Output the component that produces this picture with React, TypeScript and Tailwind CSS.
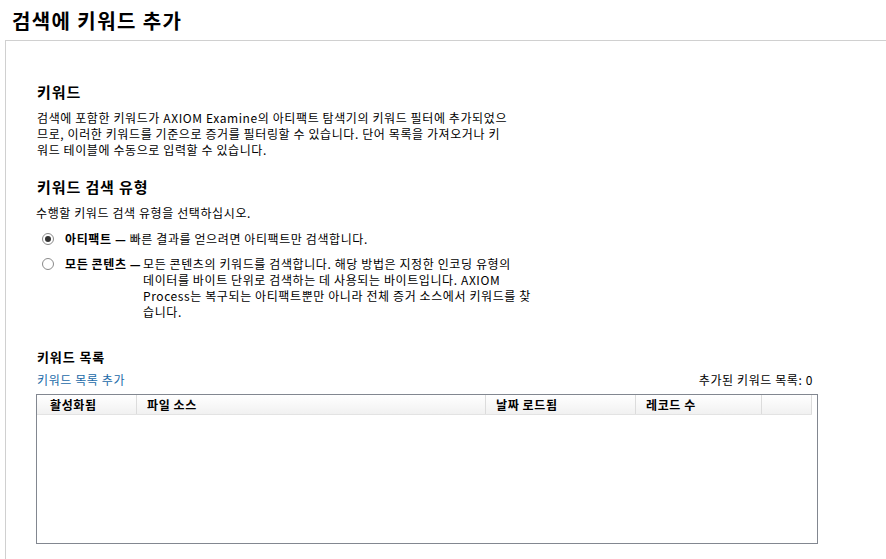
const columns = [
  { label: "활성화됨", width: "w-[100px]", pad: "pl-[13px]" },
  { label: "파일 소스", width: "w-[349px]", pad: "pl-[10px]" },
  { label: "날짜 로드됨", width: "w-[150px]", pad: "pl-[10px]" },
  { label: "레코드 수", width: "w-[126px]", pad: "pl-[10px]" },
  { label: "", width: "w-[50px]", pad: "" },
]

function Radio({ checked }: { checked?: boolean }) {
  return (
    <span className="mt-[2px] flex h-[12px] w-[12px] shrink-0 items-center justify-center rounded-full border border-[#8a8a8a] bg-white">
      {checked && <span className="h-[6px] w-[6px] rounded-full bg-[#333]" />}
    </span>
  )
}

export default function App() {
  return (
    <div
      className="h-[559px] w-[886px] overflow-hidden bg-white tracking-[0.6px] text-black"
      style={{ fontFamily: '"Noto Sans CJK KR", "Noto Sans", sans-serif' }}
    >
      <h1 className="h-[40px] pl-[12px] pt-[8px] text-[20px] font-bold leading-[26px] tracking-[1.4px]">
        검색에 키워드 추가
      </h1>

      <div className="ml-[5px] h-[519px] border-l border-t border-[#d0d0d0] pl-[31px]">
        <h2 className="mt-[41px] text-[15px] font-bold leading-[20px] tracking-[0.9px]">키워드</h2>
        <p className="mt-[8px] text-[12px] leading-[16px]">
          검색에 포함한 키워드가 AXIOM Examine의 아티팩트 탐색기의 키워드 필터에 추가되었으
          <br />
          므로, 이러한 키워드를 기준으로 증거를 필터링할 수 있습니다. 단어 목록을 가져오거나 키
          <br />
          워드 테이블에 수동으로 입력할 수 있습니다.
        </p>

        <h2 className="mt-[19px] text-[15px] font-bold leading-[20px] tracking-[0.9px]">키워드 검색 유형</h2>
        <p className="-ml-px mt-[8px] text-[12px] leading-[16px]">수행할 키워드 검색 유형을 선택하십시오.</p>

        <div className="mt-[10px] flex items-start gap-[11px] pl-[5px] text-[12px] leading-[16px]">
          <Radio checked />
          <div>
            <span className="font-bold">아티팩트 —</span> 빠른 결과를 얻으려면 아티팩트만 검색합니다.
          </div>
        </div>

        <div className="mt-[9px] flex items-start gap-[11px] pl-[5px] text-[12px] leading-[16px]">
          <Radio />
          <div className="flex">
            <span className="w-[78px] shrink-0 font-bold">모든 콘텐츠 —</span>
            <div>
              모든 콘텐츠의 키워드를 검색합니다. 해당 방법은 지정한 인코딩 유형의
              <br />
              데이터를 바이트 단위로 검색하는 데 사용되는 바이트입니다. AXIOM
              <br />
              Process는 복구되는 아티팩트뿐만 아니라 전체 증거 소스에서 키워드를 찾
              <br />
              습니다.
            </div>
          </div>
        </div>

        <h3 className="mt-[28px] text-[13px] font-bold leading-[18px] tracking-[0.9px]">키워드 목록</h3>
        <div className="mt-[6px] flex w-[776px] items-center justify-between text-[12px] leading-[16px]">
          <span className="text-[#1a6aa8]">키워드 목록 추가</span>
          <span>추가된 키워드 목록: 0</span>
        </div>

        <div className="-ml-px mt-[6px] h-[150px] w-[782px] border border-[#828790] bg-white">
          <div className="flex h-[20px] w-[775px] border-b border-[#e3e3e3] bg-gradient-to-b from-white to-[#f1f1f1]">
            {columns.map((col, i) => (
              <div
                key={i}
                className={`${col.width} ${col.pad} shrink-0 border-r border-[#dcdcdc] text-[12px] font-bold leading-[19px]`}
              >
                {col.label}
              </div>
            ))}
          </div>
        </div>
      </div>
    </div>
  )
}
